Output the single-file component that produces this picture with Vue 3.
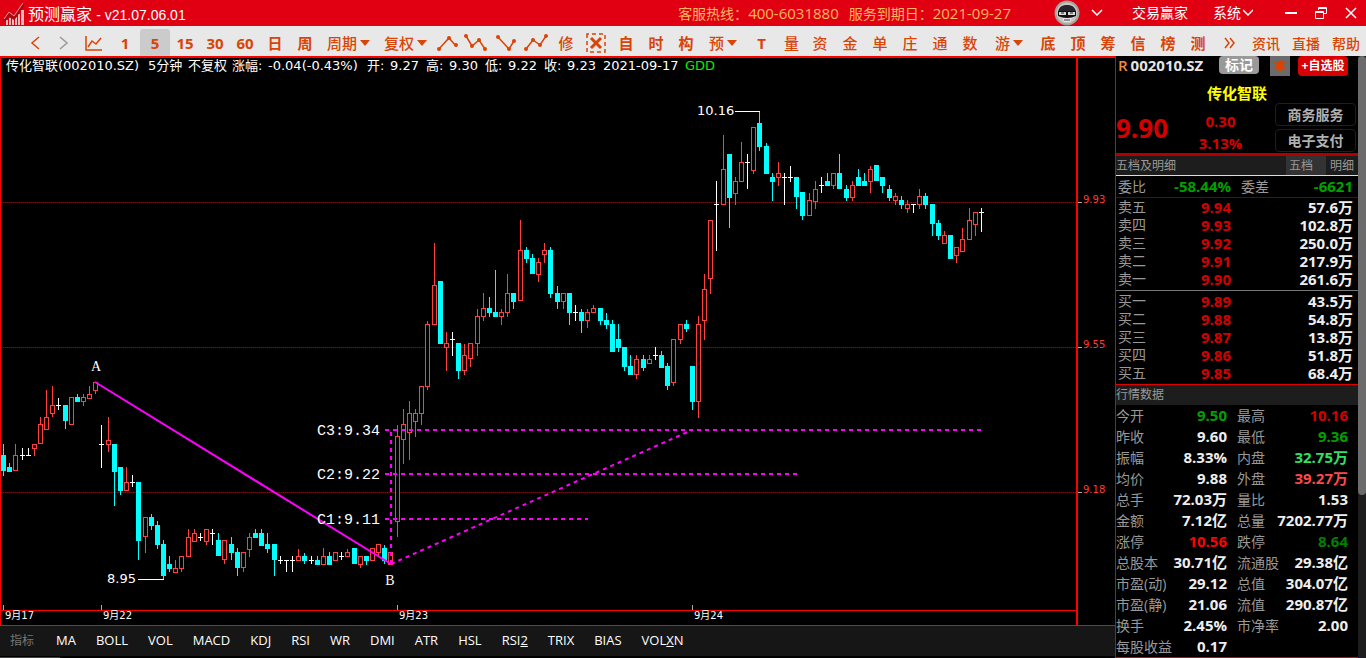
<script setup>
const tools = [
  { icon: 'back', label: '后退', w: 'w29' },
  { icon: 'forward', label: '前进', w: 'w27' },
  { icon: 'trend', label: '分时', w: 'w33' },
  { text: '1', num: true },
  { text: '5', num: true, active: true },
  { text: '15', num: true },
  { text: '30', num: true },
  { text: '60', num: true },
  { text: '日', bold: true },
  { text: '周', bold: true },
  { text: '周期', caret: true, w: 'w57' },
  { text: '复权', caret: true, w: 'w57' },
  { icon: 'zig1', label: '上折线', w: 'w27' },
  { icon: 'zig2', label: '双折线', w: 'w30' },
  { icon: 'zig3', label: '下折线', w: 'w30' },
  { icon: 'zig4', label: '上升折线', w: 'w30' },
  { text: '修' },
  { icon: 'clear', label: '清除', w: 'w30' },
  { text: '自', bold: true },
  { text: '时', bold: true },
  { text: '构', bold: true },
  { text: '预', caret: true, w: 'w44' },
  { text: 'T', num: true, w: 'w33' },
  { text: '量', w: 'w27' },
  { text: '资' },
  { text: '金' },
  { text: '单' },
  { text: '庄' },
  { text: '通' },
  { text: '数' },
  { text: '游', caret: true, w: 'w48' },
  { text: '底', bold: true },
  { text: '顶', bold: true },
  { text: '筹', bold: true },
  { text: '信', bold: true },
  { text: '榜', bold: true },
  { text: '测', bold: true },
  { icon: 'more', label: '更多', w: 'w33' },
]
const links = ['资讯', '直播', '帮助']

const prices = [
  ['开', '9.27'],
  ['高', '9.30'],
  ['低', '9.22'],
  ['收', '9.23'],
]

// x, kind (u = up, d = down, n = flat), high, body top, body bottom, low
const candles = `
3 d 444 455 471 476|9 d 463 467 472 472|15 u 444 455 471 471|22 n 448 455 456 460|28 n 448 455 456 456
34 u 444 444 449 456|40 u 417 424 444 444|46 u 390 417 430 430|52 u 386 405 414 417|58 n 398 405 406 410
65 d 405 405 421 429|71 u 397 397 425 425|77 d 394 397 402 402|83 u 394 397 402 406|89 u 386 394 399 399
95 u 382 382 391 394|101 n 425 444 445 468|108 u 417 440 445 452|114 d 444 444 472 506|120 d 467 467 491 495
126 u 467 482 491 491|132 n 475 482 483 487|138 d 482 482 541 560|145 u 517 517 537 553|151 d 514 517 526 530
157 d 521 525 545 549|163 d 540 544 576 579|169 d 556 564 569 572|175 u 560 568 573 573|181 u 556 556 569 572
188 u 529 537 557 557|194 u 529 533 542 542|200 n 533 537 538 541|206 u 529 529 542 545|212 n 529 533 534 545
218 d 533 540 556 556|224 u 540 540 560 564|231 d 537 544 553 560|237 d 548 552 568 576|243 u 552 552 568 572
249 u 533 537 550 557|255 d 529 533 538 538|261 d 529 533 546 546|267 d 533 544 549 553|274 d 544 544 560 576
280 n 556 560 561 564|286 n 560 560 561 572|292 n 556 560 561 572|298 u 549 556 561 561|304 d 553 556 561 564
311 n 556 560 561 564|317 d 556 560 565 565|323 u 548 556 565 565|329 d 552 556 565 565|335 u 552 552 561 561
341 n 552 556 557 560|347 u 549 552 557 557|354 d 548 548 564 564|360 u 556 556 565 568|366 d 556 556 561 565
372 u 548 548 561 561|378 u 544 544 553 556|384 d 545 548 561 564|390 u 552 552 565 565|397 u 425 436 522 537
403 u 409 424 440 464|409 u 401 413 433 460|415 u 409 413 422 437|421 u 386 386 414 425|427 u 321 324 387 390
434 u 243 285 325 325|440 d 281 281 344 344|446 u 332 343 348 371|452 n 332 339 340 356|458 d 343 343 371 379
464 u 344 355 371 375|470 u 343 343 359 367|477 u 309 316 344 356|483 u 293 308 317 321|489 d 297 308 313 317
495 d 270 312 317 317|501 u 309 312 317 325|507 u 274 293 313 317|513 d 293 293 302 309|520 u 220 250 301 301
526 d 247 250 259 263|532 d 254 258 274 274|538 u 258 262 275 282|544 u 243 250 255 263|550 d 247 250 294 298
557 d 286 293 302 309|563 u 293 293 302 309|569 d 293 293 313 325|575 n 305 312 313 321|581 d 309 312 321 333
587 u 309 312 321 328|593 u 305 308 313 313|600 d 308 308 321 325|606 d 313 320 325 329|612 d 320 324 352 352
618 d 324 339 348 352|624 d 347 347 367 371|630 d 355 366 375 375|636 u 355 359 375 379|643 d 355 359 368 371
649 u 355 359 364 364|655 n 347 355 356 360|661 d 351 355 368 368|667 d 363 366 386 390|673 u 339 339 383 386
680 u 324 324 340 344|686 d 320 324 329 332|692 d 366 366 402 410|698 u 316 324 402 418|704 u 274 289 321 340
710 u 220 220 279 294|716 n 181 204 205 251|723 u 135 169 205 205|729 d 154 154 198 228|735 u 177 181 194 205
741 u 142 162 182 182|747 n 154 162 163 189|753 u 127 127 171 174|759 d 111 123 147 151|766 d 143 146 174 174
772 d 173 177 182 201|778 u 162 173 178 186|784 n 173 177 178 205|790 n 166 177 178 182|796 d 177 177 197 209
802 d 192 192 216 220|809 u 193 200 216 216|815 u 181 189 202 209|821 n 177 185 186 193|827 d 173 181 186 186
833 u 173 173 186 189|839 d 154 173 189 189|846 d 185 189 198 201|852 u 181 185 198 201|858 d 169 177 186 186
864 d 173 181 186 186|870 u 166 169 182 193|876 d 165 165 181 181|882 d 177 177 186 193|889 d 185 189 198 201
895 u 193 196 201 205|901 d 196 200 205 209|907 u 200 204 209 213|913 n 204 204 205 213|919 u 189 196 205 209
925 d 193 196 205 209|932 d 204 204 224 236|938 d 220 223 236 240|944 u 231 235 244 244|950 d 235 235 259 259
956 u 247 247 256 263|962 u 228 239 252 252|969 u 208 220 240 240|975 u 212 212 225 236|981 n 208 212 213 232
`
  .trim()
  .split(/[|\n]/)
  .map((row) => {
    const [x, kind, high, top, bottom, low] = row.split(' ')
    return { x: +x, kind, high: +high, top: +top, bottom: +bottom, low: +low }
  })

const gridLines = [
  { y: 202, label: '9.93' },
  { y: 347, label: '9.55' },
  { y: 492, label: '9.18' },
]
const dates = [
  { x: 3, label: '9月17' },
  { x: 101, label: '9月22' },
  { x: 397, label: '9月23' },
  { x: 692, label: '9月24' },
]
const targets = [
  { y: 430, end: 982, label: 'C3:9.34' },
  { y: 474, end: 798, label: 'C2:9.22' },
  { y: 519, end: 588, label: 'C1:9.11' },
]

const indicators = [
  ['MA'], ['BOLL'], ['VOL'], ['MACD'], ['KDJ'], ['RSI'], ['WR'], ['DMI'], ['ATR'], ['HSL'],
  ['RSI', '2'], ['TRIX'], ['BIAS'], ['VOL', 'X', 'N'],
]

const asks = [
  ['卖五', '9.94', '57.6万'],
  ['卖四', '9.93', '102.8万'],
  ['卖三', '9.92', '250.0万'],
  ['卖二', '9.91', '217.9万'],
  ['卖一', '9.90', '261.6万'],
]
const bids = [
  ['买一', '9.89', '43.5万'],
  ['买二', '9.88', '54.8万'],
  ['买三', '9.87', '13.8万'],
  ['买四', '9.86', '51.8万'],
  ['买五', '9.85', '68.4万'],
]
const stats = [
  ['今开', '9.50', 'green', '最高', '10.16', 'red'],
  ['昨收', '9.60', '', '最低', '9.36', 'green'],
  ['振幅', '8.33%', '', '内盘', '32.75万', 'mint'],
  ['均价', '9.88', '', '外盘', '39.27万', 'coral'],
  ['总手', '72.03万', '', '量比', '1.53', ''],
  ['金额', '7.12亿', '', '总量', '7202.77万', ''],
  ['涨停', '10.56', 'pure', '跌停', '8.64', 'dark'],
  ['总股本', '30.71亿', '', '流通股', '29.38亿', ''],
  ['市盈(动)', '29.12', '', '总值', '304.07亿', ''],
  ['市盈(静)', '21.06', '', '流值', '290.87亿', ''],
  ['换手', '2.45%', '', '市净率', '2.00', ''],
  ['每股收益', '0.17', '', '', '', ''],
]
</script>

<template>
  <div class="app">
    <header class="titlebar">
      <svg class="logo" viewBox="0 0 24 26">
        <g fill="#f7b9b9">
          <rect x="6" y="20" width="2" height="5" /><rect x="9" y="18" width="2" height="7" />
          <rect x="12" y="19" width="2" height="6" /><rect x="15" y="17" width="2" height="8" />
          <rect x="18" y="14" width="2" height="11" /><rect x="21" y="10" width="3" height="15" />
        </g>
        <path d="M4 21 9 14l5 4 10-14" fill="none" stroke="#a80a14" stroke-width="3" />
        <path d="M4 19 9 12l5 4 9-13" fill="none" stroke="#ff8f8f" stroke-width="1" />
      </svg>
      <h1>预测赢家 <span>- v21.07.06.01</span></h1>
      <p class="service">
        <span>客服热线：<b>400-6031880</b></span>
        <span>服务到期日：<b>2021-09-27</b></span>
      </p>
      <button class="avatar" aria-label="用户">
        <svg width="26" height="26" viewBox="0 0 26 26">
          <circle cx="13" cy="13" r="12.5" fill="#a5a19d" />
          <circle cx="13" cy="13" r="10.5" fill="#c9c6c2" />
          <path d="M4 12c1-6 5-7 9-7s8 1 9 7z" fill="#26262a" />
          <path d="M4 11h18v5q-9 4-18 0z" fill="#111" />
          <path d="M5 12h7v3H5zM14 12h7v3h-7z" fill="#d8d8d8" />
          <path d="M7 13h3M16 13h3" stroke="#222" stroke-width="1" />
          <path d="M8 18h10l-2 4h-6z" fill="#e4e2df" />
          <path d="M10 20h6" stroke="#444" stroke-width="1" />
        </svg>
      </button>
      <button class="userdrop" aria-label="展开"><svg width="12" height="8" viewBox="0 0 12 8"><path d="m1 1 5 5 5-5" /></svg></button>
      <button class="trade">交易赢家</button>
      <button class="system">系统<svg width="10" height="8" viewBox="0 0 10 8"><path d="m0 1 5 5 5-5" /></svg></button>
      <div class="window">
        <button aria-label="最小化"><svg width="14" height="14" viewBox="0 0 14 14"><path d="M1 7h12" stroke-width="2" /></svg></button>
        <button aria-label="还原"><svg width="14" height="14" viewBox="0 0 14 14"><path d="M4.500 4V1.500h8v6H10M4 2.500h9M1.500 5.500h8v7h-8zM1 6.500h9" /></svg></button>
        <button aria-label="关闭"><svg width="14" height="14" viewBox="0 0 14 14"><path d="m2 2 10 10M12 2 2 12" stroke-width="1.5" /></svg></button>
      </div>
    </header>

    <nav class="toolbar">
      <button
        v-for="(t, i) in tools"
        :key="i"
        :class="['tool', t.w, { num: t.num, bold: t.bold, active: t.active }]"
        :aria-label="t.label"
      >
        <template v-if="t.text">{{ t.text }}</template>
        <i v-if="t.caret" class="caret"></i>
        <svg v-if="t.icon === 'back'" width="12" height="16" viewBox="0 0 12 16"><path d="m9 2-7 6 7 6" /></svg>
        <svg v-if="t.icon === 'forward'" class="muted" width="12" height="16" viewBox="0 0 12 16"><path d="m2 2 7 6-7 6" /></svg>
        <svg v-if="t.icon === 'trend'" width="18" height="16" viewBox="0 0 18 16"><path d="M1 1v14h16M3 12l4-6 4 3 5-6" /></svg>
        <svg v-if="t.icon === 'zig1'" width="22" height="18" viewBox="0 0 22 18"><path d="M2 15 12 4l7 8" /><g class="dot"><circle cx="2" cy="15" r="2" /><circle cx="12" cy="4" r="2" /><circle cx="19" cy="11" r="2" /></g></svg>
        <svg v-if="t.icon === 'zig2'" width="24" height="18" viewBox="0 0 24 18"><path d="m2 2 6 10 7-6 6 9" /><g class="dot"><circle cx="2" cy="2" r="2" /><circle cx="8" cy="12" r="2" /><circle cx="15" cy="6" r="2" /><circle cx="21" cy="15" r="2" /></g></svg>
        <svg v-if="t.icon === 'zig3'" width="22" height="18" viewBox="0 0 22 18"><path d="m3 3 11 12 5-8" /><g class="dot"><circle cx="3" cy="3" r="2" /><circle cx="14" cy="15" r="2" /><circle cx="19" cy="7" r="2" /></g></svg>
        <svg v-if="t.icon === 'zig4'" width="24" height="18" viewBox="0 0 24 18"><path d="m2 15 7-9 7 5 6-9" /><g class="dot"><circle cx="2" cy="15" r="2" /><circle cx="9" cy="6" r="2" /><circle cx="16" cy="11" r="2" /><circle cx="22" cy="2" r="2" /></g></svg>
        <svg v-if="t.icon === 'clear'" width="20" height="20" viewBox="0 0 20 20"><rect x="1" y="1" width="18" height="18" fill="none" stroke-dasharray="4 3" stroke-dashoffset="2" /><path d="m5 5 10 10M15 5 5 15" stroke-width="3" /></svg>
        <svg v-if="t.icon === 'more'" width="12" height="12" viewBox="0 0 12 12"><path d="m1 1 4 5-4 5M6 1l4 5-4 5" /></svg>
      </button>
      <div class="links">
        <a v-for="l in links" :key="l" href="#">{{ l }}</a>
      </div>
    </nav>

    <main>
      <section class="left">
        <div class="chart">
          <div class="info">
            <span>传化智联(002010.SZ)</span>
            <span>5分钟</span>
            <span>不复权</span>
            <span>涨幅:</span>
            <span>-0.04(-0.43%)</span>
            <span v-for="p in prices" :key="p[0]" class="pair"><i>{{ p[0] }}:</i>{{ p[1] }}</span>
            <span>2021-09-17</span>
            <span class="gdd">GDD</span>
          </div>
          <svg class="plot" viewBox="0 58 1115 568">
            <g v-for="g in gridLines" :key="g.y">
              <rect x="1" :y="g.y" width="1075" height="1" fill="#500000" />
              <path :d="`M1 ${g.y + 0.5}H1076`" class="dots" />
              <rect x="1078" :y="g.y" width="4" height="1" fill="#aaa" />
              <text x="1083" :y="g.y + 1" class="axis">{{ g.label }}</text>
            </g>
            <g v-for="c in candles" :key="c.x" :class="c.kind">
              <rect v-if="c.low > c.high" :x="c.x" :y="c.high" width="1" :height="c.low - c.high" />
              <rect v-if="c.kind === 'd'" :x="c.x - 2" :y="c.top" width="5" :height="c.bottom - c.top" />
              <rect v-if="c.kind === 'n'" :x="c.x - 2" :y="c.top" width="5" height="1" />
              <rect v-if="c.kind === 'u'" class="body" :x="c.x - 1.5" :y="c.top + 0.5" width="4" :height="c.bottom - c.top - 1" />
            </g>
            <g class="line">
              <path d="M95 382 391 564" class="solid" />
              <path d="M391 432V564" />
              <path d="M391 564 692 430" />
              <path v-for="t in targets" :key="t.y" :d="`M385 ${t.y}H${t.end}`" />
            </g>
            <text v-for="t in targets" :key="t.label" x="317" :y="t.y + 5" class="target">{{ t.label }}</text>
            <text x="96" y="371" class="node">A</text>
            <text x="390" y="585" class="node">B</text>
            <text x="107" y="583" class="mark">8.95</text>
            <rect x="138" y="579" width="26" height="1" fill="#fff" />
            <text x="697" y="115" class="mark">10.16</text>
            <rect x="735" y="111" width="25" height="1" fill="#fff" />
            <g fill="#f00">
              <rect x="0" y="58" width="1" height="568" />
              <rect x="1076" y="58" width="2" height="567" />
              <rect x="0" y="610" width="1078" height="1" />
              <rect x="0" y="625" width="1115" height="1" />
            </g>
            <g v-for="d in dates" :key="d.x">
              <rect :x="d.x" y="605" width="1" height="5" fill="#aaa" />
              <text :x="d.x + 2" y="619" class="date">{{ d.label }}</text>
            </g>
          </svg>
        </div>
        <div class="indicators">
          <span>指标</span>
          <button v-for="n in indicators" :key="n.join('')">{{ n[0] }}<u v-if="n[1]">{{ n[1] }}</u>{{ n[2] }}</button>
        </div>
        <div class="hscroll"></div>
      </section>

      <aside>
        <div class="panel">
          <div class="code">
            <em>R</em><strong>002010.SZ</strong>
            <button class="tag">标记</button>
            <button class="bell" aria-label="提醒">
              <svg width="14" height="14" viewBox="0 0 14 14" fill="#d84300"><path d="M7 1q1 0 1 1 3 1 3 5l1 3H2l1-3q0-4 3-5 0-1 1-1zM5 11h4l-2 2zM1 3l2-1-1 3H0zM13 3l-2-1 1 3h2z" /></svg>
            </button>
            <button class="add">+自选股</button>
          </div>
          <h2>传化智联</h2>
          <div class="quote">
            <strong>9.90</strong>
            <div class="change"><span>0.30</span><span>3.13%</span></div>
            <div class="topics"><button>商务服务</button><button>电子支付</button></div>
          </div>
          <div class="tabs">
            <h3>五档及明细</h3>
            <button class="on">五档</button>
            <button>明细</button>
          </div>
          <table class="ratio">
            <tbody>
              <tr><th>委比</th><td>-58.44%</td><th>委差</th><td>-6621</td><td></td></tr>
            </tbody>
          </table>
          <table class="book asks">
            <tbody>
              <tr v-for="r in asks" :key="r[0]"><th>{{ r[0] }}</th><td class="red">{{ r[1] }}</td><td>{{ r[2] }}</td><td></td></tr>
            </tbody>
          </table>
          <table class="book bids">
            <tbody>
              <tr v-for="r in bids" :key="r[0]"><th>{{ r[0] }}</th><td class="red">{{ r[1] }}</td><td>{{ r[2] }}</td><td></td></tr>
            </tbody>
          </table>
          <h3 class="heading">行情数据</h3>
          <table class="stats">
            <tbody>
              <tr v-for="r in stats" :key="r[0]">
                <th>{{ r[0] }}</th><td :class="r[2]">{{ r[1] }}</td>
                <th>{{ r[3] }}</th><td :class="r[5]">{{ r[4] }}</td><td></td>
              </tr>
            </tbody>
          </table>
        </div>
        <div class="vscroll"><div class="thumb"></div></div>
      </aside>
    </main>
  </div>
</template>

<style>
body {
  background: #000;
  overflow: hidden;
}
</style>

<style scoped>
* {
  box-sizing: border-box;
}
.app {
  display: flex;
  flex-direction: column;
  min-height: 100vh;
  background: #000;
  color: #fff;
  font-family: "Open Sans", "Noto Sans CJK SC", sans-serif;
  font-size: 14px;
  white-space: nowrap;
}
button {
  margin: 0;
  padding: 0;
  border: 0;
  background: none;
  color: inherit;
  font: inherit;
  white-space: nowrap;
}
h1, h2, h3, p {
  margin: 0;
  font-weight: 400;
}
svg {
  display: block;
  flex: none;
}
.titlebar {
  display: flex;
  align-items: center;
  height: 26px;
  background: #e00012;
  line-height: 20px;
}
.logo {
  width: 24px;
  height: 26px;
  margin-right: 4px;
}
.titlebar h1 {
  flex: 1;
  font-size: 16px;
  padding-top: 3px;
}
.titlebar h1 span {
  font-family: "Liberation Sans", sans-serif;
  font-size: 14px;
}
.service {
  display: flex;
  gap: 10px;
  margin-right: 43px;
  color: #ffb85f;
}
.service b {
  font-weight: 400;
  font-size: 15px;
}
.userdrop path, .system path, .window path {
  fill: none;
  stroke: #fff;
}
.userdrop path, .system path {
  stroke-width: 1.5;
}
.userdrop {
  margin-left: 11px;
}
.trade {
  margin-left: 29px;
}
.system {
  display: flex;
  align-items: center;
  gap: 2px;
  margin-left: 25px;
}
.window {
  display: flex;
  gap: 16px;
  margin: 0 8px 0 31px;
}
.toolbar {
  display: flex;
  align-items: center;
  height: 30px;
  padding-left: 21px;
  background: #e8e8e8;
  color: #d94407;
  overflow: hidden;
}
.tool {
  display: flex;
  flex: none;
  align-items: center;
  justify-content: center;
  gap: 3px;
  width: 30px;
  height: 27px;
  margin-top: 3px;
  font-size: 15px;
  font-weight: 500;
}
.tool.w27 { width: 27px; }
.tool.w29 { width: 29px; }
.tool.w33 { width: 33px; }
.tool.w44 { width: 44px; }
.tool.w48 { width: 48px; }
.tool.w57 { width: 57px; }
.tool.num, .tool.bold {
  font-weight: 700;
}
.tool.active {
  background: #cbcbcb;
  border-radius: 3px 3px 0 0;
}
.tool svg {
  fill: none;
  stroke: #d94407;
  stroke-width: 1.5;
}
.tool svg.muted {
  stroke: #999;
}
.tool .dot {
  fill: #d94407;
  stroke: none;
}
.caret {
  border: 5px solid transparent;
  border-top: 6px solid #d94407;
  border-bottom: 0;
}
.links {
  display: flex;
  gap: 12px;
  margin: 3px 6px 0 auto;
}
.links a {
  color: inherit;
  font-weight: 500;
  text-decoration: none;
}
main {
  display: grid;
  grid-template-columns: minmax(0, 1fr) 251px;
  flex: 1;
}
.left {
  display: flex;
  flex-direction: column;
}
.chart {
  position: relative;
  border-top: 2px solid #f00;
}
.info {
  position: absolute;
  top: 0;
  left: 6px;
  display: grid;
  grid-template-columns: 142px 40px 44px 36px 99px 59px 59px 59px 59px 82px auto;
  font-family: "DejaVu Sans", "Noto Sans CJK SC", sans-serif;
  font-size: 13px;
  line-height: 16px;
}
.pair {
  display: flex;
}
.pair i {
  width: 23px;
  font-style: normal;
}
.gdd {
  color: #00f000;
}
.plot {
  width: 100%;
  height: auto;
}
.plot rect {
  shape-rendering: crispEdges;
}
.dots {
  fill: none;
  stroke: #a00000;
  stroke-dasharray: 1 1;
}
.u { fill: #ff4040; }
.d { fill: #0ff; }
.n { fill: #fff; }
.body {
  fill: #000;
  stroke: #ff4040;
}
.line path {
  fill: none;
  stroke: #f0f;
  stroke-width: 2;
  stroke-dasharray: 4 4;
}
.line .solid {
  stroke-dasharray: none;
}
.plot text {
  fill: #fff;
  font-family: "DejaVu Sans", "Noto Sans CJK SC", sans-serif;
}
.plot .axis {
  fill: #ff3b30;
  font-size: 10px;
}
.plot .date {
  font-size: 10px;
}
.plot .mark {
  font-size: 13px;
}
.plot .target {
  font-family: "Liberation Mono", monospace;
  font-size: 15px;
}
.plot .node {
  font-family: "Liberation Serif", serif;
  font-size: 14px;
  text-anchor: middle;
}
.indicators {
  display: flex;
  align-items: center;
  gap: 20px;
  height: 30px;
  padding: 0 0 2px 10px;
  background: #161616;
  font-size: 13px;
}
.indicators span {
  margin-right: 2px;
  color: #777;
  font-size: 12px;
}
.hscroll {
  width: 60px;
  height: 1px;
  margin-top: 1px;
  background: #444;
}
aside {
  display: grid;
  grid-template-columns: minmax(0, 1fr) 8px;
  border-left: 1px solid #e00000;
}
.panel {
  border-bottom: 1px solid #e00000;
}
.code {
  display: flex;
  height: 20px;
  padding: 0 10px 0 2px;
  line-height: 18px;
}
.code em {
  margin-right: 3px;
  color: #f08c3c;
  font-size: 15px;
  font-style: normal;
  font-weight: 600;
}
.code strong {
  flex: 1;
  color: #e4e4e4;
  font-size: 15px;
}
.tag {
  width: 40px;
  height: 18px;
  margin-right: 11px;
  background: #999;
  border-radius: 4px;
  font-weight: 700;
}
.bell {
  display: grid;
  place-items: center;
  width: 20px;
  margin-right: 8px;
  background: #6b6b6b;
}
.add {
  width: 50px;
  background: #d80000;
  border-radius: 4px;
  font-size: 12px;
  font-weight: 700;
}
h2 {
  padding-top: 7px;
  color: #ff0;
  font-size: 15px;
  font-weight: 700;
  line-height: 20px;
  text-align: center;
}
.quote {
  display: grid;
  grid-template-columns: 74px 1fr 81px;
  height: 50px;
  padding-right: 2px;
  color: #d40000;
  font-weight: 700;
}
.quote strong {
  font-size: 26px;
  font-weight: 700;
  line-height: 50px;
}
.change {
  display: flex;
  flex-direction: column;
  align-items: center;
  padding: 7px 24px 0 0;
  font-size: 15px;
  line-height: 22px;
}
.topics {
  display: grid;
  gap: 3px;
  padding-bottom: 2px;
  color: #b0b0b0;
}
.topics button {
  border: 1px solid #1e1e1e;
  border-radius: 4px;
  font-weight: 700;
  line-height: 20px;
}
.tabs {
  display: flex;
  height: 23px;
  border-top: 3px solid #b00000;
  border-bottom: 1px solid #ddd;
  background: #1d1d1d;
  color: #999;
  font-size: 12px;
  line-height: 19px;
}
.tabs h3 {
  flex: 1;
}
.tabs button {
  width: 32px;
}
.tabs .on {
  width: 40px;
  padding-right: 10px;
  background: #333;
}
h3 {
  color: #999;
  font-size: 12px;
}
.heading {
  background: #1d1d1d;
  line-height: 20px;
}
table {
  width: 100%;
  table-layout: fixed;
  border-collapse: separate;
  border-spacing: 0;
}
th, td {
  padding: 0;
}
th {
  color: #999;
  font-size: 14px;
  font-weight: 400;
  text-align: left;
}
td {
  color: #eee;
  font-size: 15px;
  font-weight: 700;
  text-align: right;
}
.ratio {
  border-bottom: 1px solid #222;
  line-height: 21px;
}
.ratio th {
  width: 48px;
  padding-left: 10px;
}
.ratio th:first-child {
  width: 38px;
  padding-left: 2px;
}
.ratio td {
  width: 77px;
  color: #00a000;
}
.ratio td:nth-child(4) {
  width: 74px;
}
.ratio td:last-child, .book td:last-child {
  width: auto;
}
.book {
  line-height: 18px;
}
.book th {
  width: 60px;
  padding-left: 2px;
}
.book td {
  width: 55px;
}
.book td:nth-child(3) {
  width: 122px;
}
.asks {
  padding-bottom: 2px;
  border-bottom: 1px solid #777;
}
.bids {
  padding: 1px 0 2px;
  border-bottom: 1px solid #e00000;
}
.stats {
  line-height: 21px;
}
.stats th {
  width: 56px;
}
.stats td {
  width: 55px;
}
.stats th:nth-child(3) {
  width: 50px;
  padding-left: 10px;
}
.stats td:nth-child(4) {
  width: 71px;
}
.stats td:last-child {
  width: auto;
}
td.red { color: #d40000; }
td.green { color: #00a000; }
td.mint { color: #34e060; }
td.coral { color: #ff4848; }
td.pure { color: #f00; }
td.dark { color: #008000; }
.vscroll {
  background: #1d1d1d;
}
.thumb {
  height: 73%;
  border-radius: 4px;
  background: #6b6b6b;
}
</style>
